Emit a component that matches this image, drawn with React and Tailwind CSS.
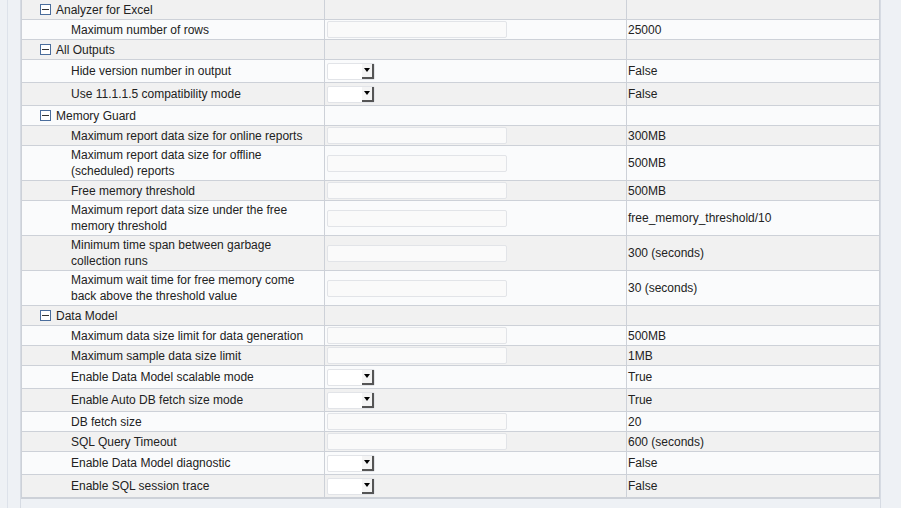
import React from "react";

const rows = [
  { g: "Analyzer for Excel" },
  { l: "Maximum number of rows", t: "in", v: "25000", h: 20 },
  { g: "All Outputs" },
  { l: "Hide version number in output", t: "sel", v: "False", h: 23 },
  { l: "Use 11.1.1.5 compatibility mode", t: "sel", v: "False", h: 23 },
  { g: "Memory Guard" },
  { l: "Maximum report data size for online reports", t: "in", v: "300MB", h: 20 },
  { l: "Maximum report data size for offline (scheduled) reports", t: "in", v: "500MB", h: 35 },
  { l: "Free memory threshold", t: "in", v: "500MB", h: 20 },
  { l: "Maximum report data size under the free memory threshold", t: "in", v: "free_memory_threshold/10", h: 35 },
  { l: "Minimum time span between garbage collection runs", t: "in", v: "300 (seconds)", h: 35 },
  { l: "Maximum wait time for free memory come back above the threshold value", t: "in", v: "30 (seconds)", h: 35 },
  { g: "Data Model" },
  { l: "Maximum data size limit for data generation", t: "in", v: "500MB", h: 20 },
  { l: "Maximum sample data size limit", t: "in", v: "1MB", h: 20 },
  { l: "Enable Data Model scalable mode", t: "sel", v: "True", h: 23 },
  { l: "Enable Auto DB fetch size mode", t: "sel", v: "True", h: 23 },
  { l: "DB fetch size", t: "in", v: "20", h: 20 },
  { l: "SQL Query Timeout", t: "in", v: "600 (seconds)", h: 20 },
  { l: "Enable Data Model diagnostic", t: "sel", v: "False", h: 23 },
  { l: "Enable SQL session trace", t: "sel", v: "False", h: 23 },
];

const Minus = () => (
  <span className="inline-flex w-[11px] h-[11px] border border-[#4a6d9c] bg-white items-center justify-center mr-[5px]">
    <span className="w-[7px] h-px bg-[#333]" />
  </span>
);

export default function App() {
  return (
    <div className="w-[901px] h-[508px] bg-[#eef1f5] flex overflow-hidden text-[12px] text-[#222]" style={{ fontFamily: "'Liberation Sans', Arial, sans-serif" }}>
      <div className="w-[21px] border-r border-[#d6dbe3] shrink-0 flex">
        <div className="w-[8px] border-r border-[#dde2ea]" />
      </div>
      <div className="w-[859px] shrink-0">
        <div className="border border-t-0 border-[#cdd1d8]">
          {rows.map((r, i) => {
            const bg = i % 2 === 0 ? "bg-[#f1f1f1]" : "bg-[#fafbfc]";
            const h = r.g ? 20 : r.h;
            return (
              <div key={i} className={`flex border-b border-[#cdd1d8] ${bg}`} style={{ height: h }}>
                <div className="w-[303px] border-r border-[#cdd1d8] flex items-center leading-[16px]">
                  {r.g ? (
                    <div className="flex items-center pl-[18px]"><Minus />{r.g}</div>
                  ) : (
                    <div className="pl-[49px] pr-2">{r.l}</div>
                  )}
                </div>
                <div className="w-[302px] border-r border-[#cdd1d8] flex items-center pl-[2px]">
                  {r.t === "in" && <div className="w-[180px] h-[17px] bg-[#fafafa] border border-[#e2e4e8] rounded-[2px]" />}
                  {r.t === "sel" && (
                    <div className="w-[48px] h-[17px] bg-white border border-[#e2e4e8] rounded-[2px] flex justify-end">
                      <div className="w-[12px] h-full bg-[#f4f4f4] border-r-2 border-b-2 border-[#555] flex items-center justify-center">
                        <span className="w-0 h-0 border-l-[3px] border-r-[3px] border-t-[4px] border-l-transparent border-r-transparent border-t-black" />
                      </div>
                    </div>
                  )}
                </div>
                <div className="flex-1 flex items-center pl-[1px]">{r.v}</div>
              </div>
            );
          })}
        </div>
      </div>
      <div className="flex-1 border-l border-[#d6dbe3]" />
    </div>
  );
}
